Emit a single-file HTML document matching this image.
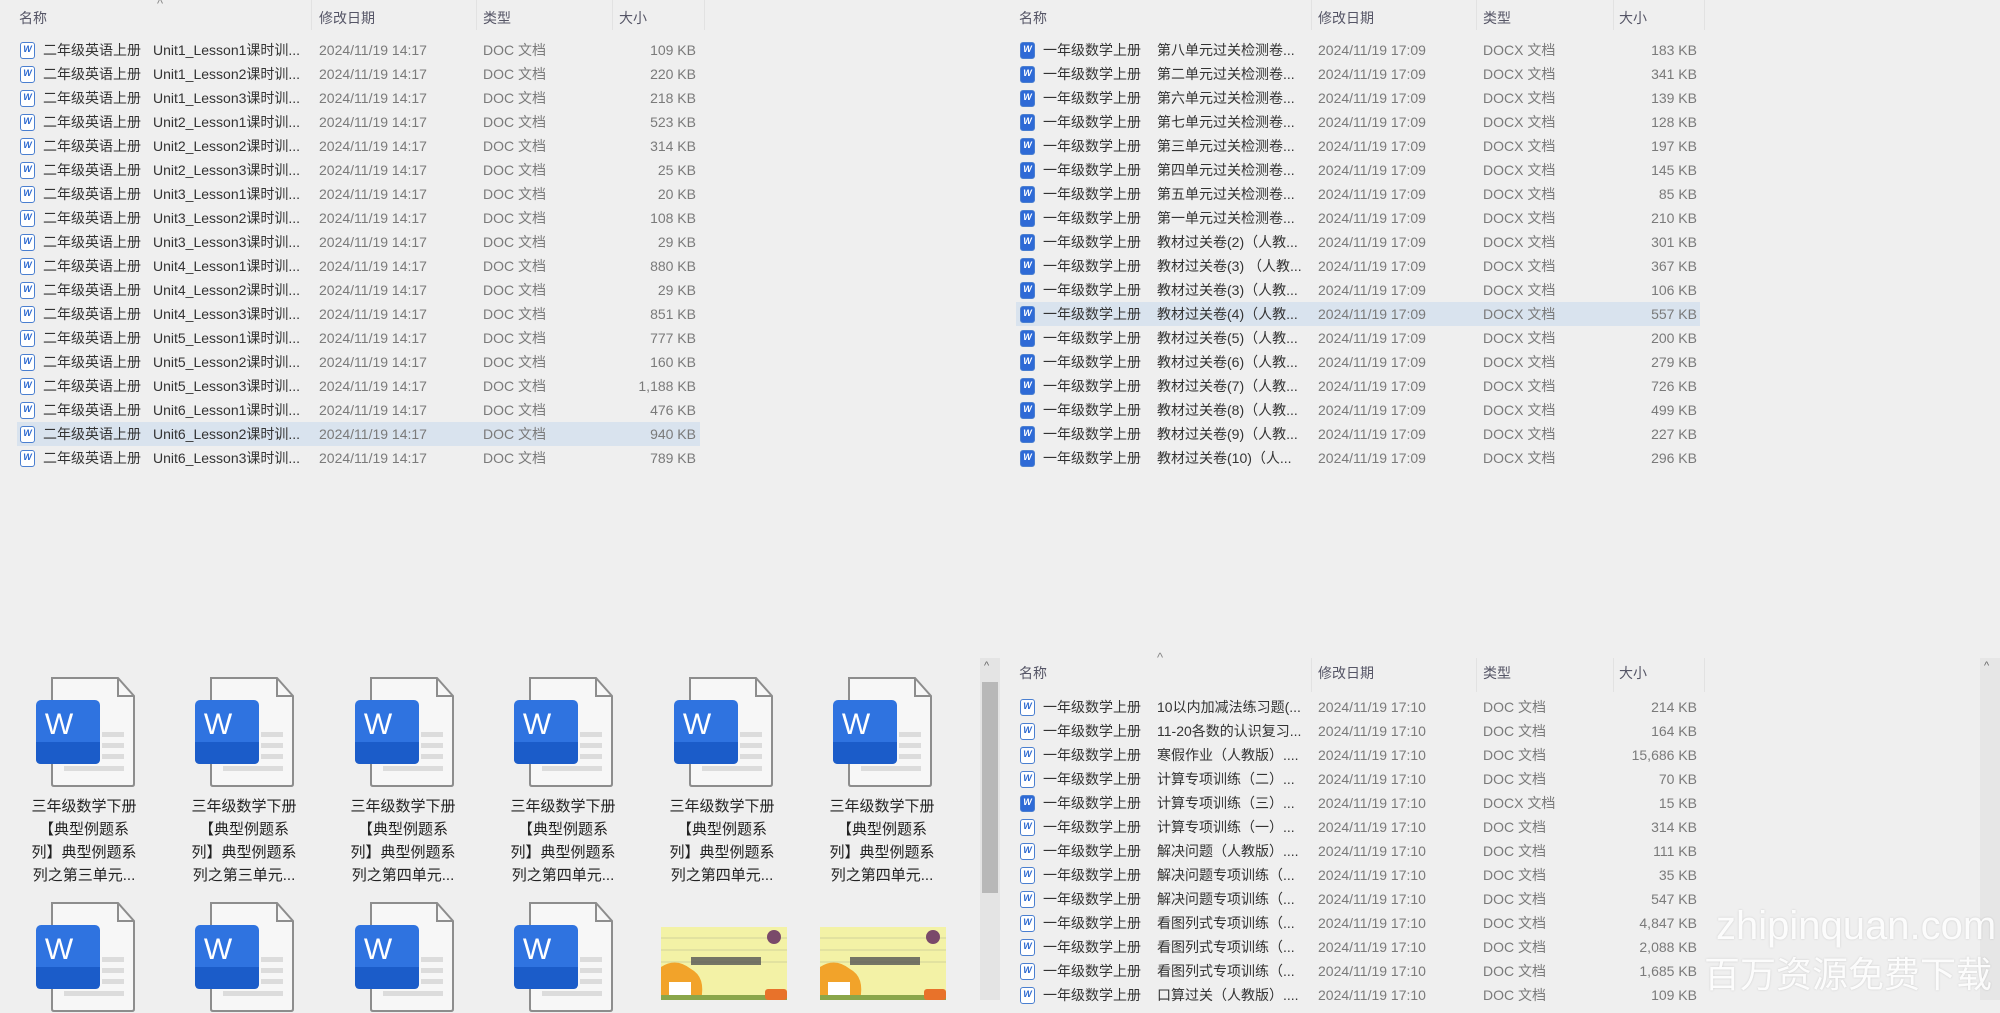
<!DOCTYPE html>
<html><head><meta charset="utf-8"><style>
*{margin:0;padding:0;box-sizing:border-box}
body{width:2000px;height:1000px;overflow:hidden;background:#efefef;font-family:"Liberation Sans","Noto Sans CJK SC",sans-serif;font-size:14px;position:relative}
.a{position:absolute;white-space:nowrap}
.h{color:#556;font-size:14px}
.sep{position:absolute;width:1px;background:#e2e2e2}
.r{position:absolute;height:24px;line-height:24px;color:#333}
.r span{position:absolute;white-space:nowrap}
.g{color:#7a7a7a}
.sel{background:#d9e3ee}
.ic{position:absolute;top:4px;width:15px;height:17px;border:1.5px solid #4a7fd0;border-radius:3px;background:#fff;font-size:9px;line-height:13px;text-align:center;color:#2f6bd0;font-weight:bold}
.icx{background:#2e6ad6;color:#fff}
.lab{position:absolute;width:140px;text-align:center;font-size:15px;line-height:23px;color:#222}
</style></head><body>
<svg width="0" height="0" style="position:absolute"><defs>
<symbol id="wd" viewBox="0 0 100 112">
<path d="M16 2 H82 L98 20 V108 Q98 110 96 110 H18 Q16 110 16 108 Z" fill="#f7f7f7" stroke="#8d8d8d" stroke-width="2"/>
<path d="M82 2 V20 H98" fill="none" stroke="#8d8d8d" stroke-width="2"/>
<rect x="66" y="56" width="22" height="5" fill="#dcdcdc"/><rect x="66" y="67" width="22" height="5" fill="#dcdcdc"/><rect x="66" y="78" width="22" height="5" fill="#dcdcdc"/><rect x="28" y="90" width="60" height="5" fill="#dcdcdc"/>
<rect x="0" y="24" width="64" height="64" rx="5" fill="#2f73e0"/>
<path d="M0 66 H64 V83 Q64 88 59 88 H5 Q0 88 0 83 Z" fill="#1b5cc9"/>
<text x="23" y="58" text-anchor="middle" font-family="Liberation Sans" font-size="30" fill="#fff">W</text>
</symbol></defs></svg>

<!-- top-left header -->
<div class="a h" style="left:19px;top:8px">名称</div>
<div class="a" style="left:157px;top:-4px;color:#888;font-size:13px">^</div>
<div class="a h" style="left:319px;top:8px">修改日期</div>
<div class="a h" style="left:483px;top:8px">类型</div>
<div class="a h" style="left:619px;top:8px">大小</div>
<div class="sep" style="left:311px;top:0;height:30px"></div><div class="sep" style="left:476px;top:0;height:30px"></div><div class="sep" style="left:612px;top:0;height:30px"></div><div class="sep" style="left:704px;top:0;height:30px"></div>
<!-- top-right header -->
<div class="a h" style="left:1019px;top:8px">名称</div>
<div class="a h" style="left:1318px;top:8px">修改日期</div>
<div class="a h" style="left:1483px;top:8px">类型</div>
<div class="a h" style="left:1619px;top:8px">大小</div>
<div class="sep" style="left:1311px;top:0;height:30px"></div><div class="sep" style="left:1476px;top:0;height:30px"></div><div class="sep" style="left:1613px;top:0;height:30px"></div><div class="sep" style="left:1704px;top:0;height:30px"></div>

<div id="tl">
<div class="r" style="left:17px;width:683px;top:38px"><i class="ic" style="left:3px">W</i><span style="left:26px">二年级英语上册</span><span style="left:136px">Unit1_Lesson1课时训...</span><span class="g" style="left:302px">2024/11/19 14:17</span><span class="g" style="left:466px">DOC 文档</span><span class="g" style="right:4px">109 KB</span></div>
<div class="r" style="left:17px;width:683px;top:62px"><i class="ic" style="left:3px">W</i><span style="left:26px">二年级英语上册</span><span style="left:136px">Unit1_Lesson2课时训...</span><span class="g" style="left:302px">2024/11/19 14:17</span><span class="g" style="left:466px">DOC 文档</span><span class="g" style="right:4px">220 KB</span></div>
<div class="r" style="left:17px;width:683px;top:86px"><i class="ic" style="left:3px">W</i><span style="left:26px">二年级英语上册</span><span style="left:136px">Unit1_Lesson3课时训...</span><span class="g" style="left:302px">2024/11/19 14:17</span><span class="g" style="left:466px">DOC 文档</span><span class="g" style="right:4px">218 KB</span></div>
<div class="r" style="left:17px;width:683px;top:110px"><i class="ic" style="left:3px">W</i><span style="left:26px">二年级英语上册</span><span style="left:136px">Unit2_Lesson1课时训...</span><span class="g" style="left:302px">2024/11/19 14:17</span><span class="g" style="left:466px">DOC 文档</span><span class="g" style="right:4px">523 KB</span></div>
<div class="r" style="left:17px;width:683px;top:134px"><i class="ic" style="left:3px">W</i><span style="left:26px">二年级英语上册</span><span style="left:136px">Unit2_Lesson2课时训...</span><span class="g" style="left:302px">2024/11/19 14:17</span><span class="g" style="left:466px">DOC 文档</span><span class="g" style="right:4px">314 KB</span></div>
<div class="r" style="left:17px;width:683px;top:158px"><i class="ic" style="left:3px">W</i><span style="left:26px">二年级英语上册</span><span style="left:136px">Unit2_Lesson3课时训...</span><span class="g" style="left:302px">2024/11/19 14:17</span><span class="g" style="left:466px">DOC 文档</span><span class="g" style="right:4px">25 KB</span></div>
<div class="r" style="left:17px;width:683px;top:182px"><i class="ic" style="left:3px">W</i><span style="left:26px">二年级英语上册</span><span style="left:136px">Unit3_Lesson1课时训...</span><span class="g" style="left:302px">2024/11/19 14:17</span><span class="g" style="left:466px">DOC 文档</span><span class="g" style="right:4px">20 KB</span></div>
<div class="r" style="left:17px;width:683px;top:206px"><i class="ic" style="left:3px">W</i><span style="left:26px">二年级英语上册</span><span style="left:136px">Unit3_Lesson2课时训...</span><span class="g" style="left:302px">2024/11/19 14:17</span><span class="g" style="left:466px">DOC 文档</span><span class="g" style="right:4px">108 KB</span></div>
<div class="r" style="left:17px;width:683px;top:230px"><i class="ic" style="left:3px">W</i><span style="left:26px">二年级英语上册</span><span style="left:136px">Unit3_Lesson3课时训...</span><span class="g" style="left:302px">2024/11/19 14:17</span><span class="g" style="left:466px">DOC 文档</span><span class="g" style="right:4px">29 KB</span></div>
<div class="r" style="left:17px;width:683px;top:254px"><i class="ic" style="left:3px">W</i><span style="left:26px">二年级英语上册</span><span style="left:136px">Unit4_Lesson1课时训...</span><span class="g" style="left:302px">2024/11/19 14:17</span><span class="g" style="left:466px">DOC 文档</span><span class="g" style="right:4px">880 KB</span></div>
<div class="r" style="left:17px;width:683px;top:278px"><i class="ic" style="left:3px">W</i><span style="left:26px">二年级英语上册</span><span style="left:136px">Unit4_Lesson2课时训...</span><span class="g" style="left:302px">2024/11/19 14:17</span><span class="g" style="left:466px">DOC 文档</span><span class="g" style="right:4px">29 KB</span></div>
<div class="r" style="left:17px;width:683px;top:302px"><i class="ic" style="left:3px">W</i><span style="left:26px">二年级英语上册</span><span style="left:136px">Unit4_Lesson3课时训...</span><span class="g" style="left:302px">2024/11/19 14:17</span><span class="g" style="left:466px">DOC 文档</span><span class="g" style="right:4px">851 KB</span></div>
<div class="r" style="left:17px;width:683px;top:326px"><i class="ic" style="left:3px">W</i><span style="left:26px">二年级英语上册</span><span style="left:136px">Unit5_Lesson1课时训...</span><span class="g" style="left:302px">2024/11/19 14:17</span><span class="g" style="left:466px">DOC 文档</span><span class="g" style="right:4px">777 KB</span></div>
<div class="r" style="left:17px;width:683px;top:350px"><i class="ic" style="left:3px">W</i><span style="left:26px">二年级英语上册</span><span style="left:136px">Unit5_Lesson2课时训...</span><span class="g" style="left:302px">2024/11/19 14:17</span><span class="g" style="left:466px">DOC 文档</span><span class="g" style="right:4px">160 KB</span></div>
<div class="r" style="left:17px;width:683px;top:374px"><i class="ic" style="left:3px">W</i><span style="left:26px">二年级英语上册</span><span style="left:136px">Unit5_Lesson3课时训...</span><span class="g" style="left:302px">2024/11/19 14:17</span><span class="g" style="left:466px">DOC 文档</span><span class="g" style="right:4px">1,188 KB</span></div>
<div class="r" style="left:17px;width:683px;top:398px"><i class="ic" style="left:3px">W</i><span style="left:26px">二年级英语上册</span><span style="left:136px">Unit6_Lesson1课时训...</span><span class="g" style="left:302px">2024/11/19 14:17</span><span class="g" style="left:466px">DOC 文档</span><span class="g" style="right:4px">476 KB</span></div>
<div class="r sel" style="left:17px;width:683px;top:422px"><i class="ic" style="left:3px">W</i><span style="left:26px">二年级英语上册</span><span style="left:136px">Unit6_Lesson2课时训...</span><span class="g" style="left:302px">2024/11/19 14:17</span><span class="g" style="left:466px">DOC 文档</span><span class="g" style="right:4px">940 KB</span></div>
<div class="r" style="left:17px;width:683px;top:446px"><i class="ic" style="left:3px">W</i><span style="left:26px">二年级英语上册</span><span style="left:136px">Unit6_Lesson3课时训...</span><span class="g" style="left:302px">2024/11/19 14:17</span><span class="g" style="left:466px">DOC 文档</span><span class="g" style="right:4px">789 KB</span></div>
</div>

<div id="tr">
<div class="r" style="left:1016px;width:684px;top:38px"><i class="ic icx" style="left:4px">W</i><span style="left:27px">一年级数学上册</span><span style="left:141px">第八单元过关检测卷...</span><span class="g" style="left:302px">2024/11/19 17:09</span><span class="g" style="left:467px">DOCX 文档</span><span class="g" style="right:3px">183 KB</span></div>
<div class="r" style="left:1016px;width:684px;top:62px"><i class="ic icx" style="left:4px">W</i><span style="left:27px">一年级数学上册</span><span style="left:141px">第二单元过关检测卷...</span><span class="g" style="left:302px">2024/11/19 17:09</span><span class="g" style="left:467px">DOCX 文档</span><span class="g" style="right:3px">341 KB</span></div>
<div class="r" style="left:1016px;width:684px;top:86px"><i class="ic icx" style="left:4px">W</i><span style="left:27px">一年级数学上册</span><span style="left:141px">第六单元过关检测卷...</span><span class="g" style="left:302px">2024/11/19 17:09</span><span class="g" style="left:467px">DOCX 文档</span><span class="g" style="right:3px">139 KB</span></div>
<div class="r" style="left:1016px;width:684px;top:110px"><i class="ic icx" style="left:4px">W</i><span style="left:27px">一年级数学上册</span><span style="left:141px">第七单元过关检测卷...</span><span class="g" style="left:302px">2024/11/19 17:09</span><span class="g" style="left:467px">DOCX 文档</span><span class="g" style="right:3px">128 KB</span></div>
<div class="r" style="left:1016px;width:684px;top:134px"><i class="ic icx" style="left:4px">W</i><span style="left:27px">一年级数学上册</span><span style="left:141px">第三单元过关检测卷...</span><span class="g" style="left:302px">2024/11/19 17:09</span><span class="g" style="left:467px">DOCX 文档</span><span class="g" style="right:3px">197 KB</span></div>
<div class="r" style="left:1016px;width:684px;top:158px"><i class="ic icx" style="left:4px">W</i><span style="left:27px">一年级数学上册</span><span style="left:141px">第四单元过关检测卷...</span><span class="g" style="left:302px">2024/11/19 17:09</span><span class="g" style="left:467px">DOCX 文档</span><span class="g" style="right:3px">145 KB</span></div>
<div class="r" style="left:1016px;width:684px;top:182px"><i class="ic icx" style="left:4px">W</i><span style="left:27px">一年级数学上册</span><span style="left:141px">第五单元过关检测卷...</span><span class="g" style="left:302px">2024/11/19 17:09</span><span class="g" style="left:467px">DOCX 文档</span><span class="g" style="right:3px">85 KB</span></div>
<div class="r" style="left:1016px;width:684px;top:206px"><i class="ic icx" style="left:4px">W</i><span style="left:27px">一年级数学上册</span><span style="left:141px">第一单元过关检测卷...</span><span class="g" style="left:302px">2024/11/19 17:09</span><span class="g" style="left:467px">DOCX 文档</span><span class="g" style="right:3px">210 KB</span></div>
<div class="r" style="left:1016px;width:684px;top:230px"><i class="ic icx" style="left:4px">W</i><span style="left:27px">一年级数学上册</span><span style="left:141px">教材过关卷(2)（人教...</span><span class="g" style="left:302px">2024/11/19 17:09</span><span class="g" style="left:467px">DOCX 文档</span><span class="g" style="right:3px">301 KB</span></div>
<div class="r" style="left:1016px;width:684px;top:254px"><i class="ic icx" style="left:4px">W</i><span style="left:27px">一年级数学上册</span><span style="left:141px">教材过关卷(3) （人教...</span><span class="g" style="left:302px">2024/11/19 17:09</span><span class="g" style="left:467px">DOCX 文档</span><span class="g" style="right:3px">367 KB</span></div>
<div class="r" style="left:1016px;width:684px;top:278px"><i class="ic icx" style="left:4px">W</i><span style="left:27px">一年级数学上册</span><span style="left:141px">教材过关卷(3)（人教...</span><span class="g" style="left:302px">2024/11/19 17:09</span><span class="g" style="left:467px">DOCX 文档</span><span class="g" style="right:3px">106 KB</span></div>
<div class="r sel" style="left:1016px;width:684px;top:302px"><i class="ic icx" style="left:4px">W</i><span style="left:27px">一年级数学上册</span><span style="left:141px">教材过关卷(4)（人教...</span><span class="g" style="left:302px">2024/11/19 17:09</span><span class="g" style="left:467px">DOCX 文档</span><span class="g" style="right:3px">557 KB</span></div>
<div class="r" style="left:1016px;width:684px;top:326px"><i class="ic icx" style="left:4px">W</i><span style="left:27px">一年级数学上册</span><span style="left:141px">教材过关卷(5)（人教...</span><span class="g" style="left:302px">2024/11/19 17:09</span><span class="g" style="left:467px">DOCX 文档</span><span class="g" style="right:3px">200 KB</span></div>
<div class="r" style="left:1016px;width:684px;top:350px"><i class="ic icx" style="left:4px">W</i><span style="left:27px">一年级数学上册</span><span style="left:141px">教材过关卷(6)（人教...</span><span class="g" style="left:302px">2024/11/19 17:09</span><span class="g" style="left:467px">DOCX 文档</span><span class="g" style="right:3px">279 KB</span></div>
<div class="r" style="left:1016px;width:684px;top:374px"><i class="ic icx" style="left:4px">W</i><span style="left:27px">一年级数学上册</span><span style="left:141px">教材过关卷(7)（人教...</span><span class="g" style="left:302px">2024/11/19 17:09</span><span class="g" style="left:467px">DOCX 文档</span><span class="g" style="right:3px">726 KB</span></div>
<div class="r" style="left:1016px;width:684px;top:398px"><i class="ic icx" style="left:4px">W</i><span style="left:27px">一年级数学上册</span><span style="left:141px">教材过关卷(8)（人教...</span><span class="g" style="left:302px">2024/11/19 17:09</span><span class="g" style="left:467px">DOCX 文档</span><span class="g" style="right:3px">499 KB</span></div>
<div class="r" style="left:1016px;width:684px;top:422px"><i class="ic icx" style="left:4px">W</i><span style="left:27px">一年级数学上册</span><span style="left:141px">教材过关卷(9)（人教...</span><span class="g" style="left:302px">2024/11/19 17:09</span><span class="g" style="left:467px">DOCX 文档</span><span class="g" style="right:3px">227 KB</span></div>
<div class="r" style="left:1016px;width:684px;top:446px"><i class="ic icx" style="left:4px">W</i><span style="left:27px">一年级数学上册</span><span style="left:141px">教材过关卷(10)（人...</span><span class="g" style="left:302px">2024/11/19 17:09</span><span class="g" style="left:467px">DOCX 文档</span><span class="g" style="right:3px">296 KB</span></div>
</div>

<!-- bottom-left icons panel -->
<svg class="a" style="left:36px;top:676px" width="100" height="112"><use href="#wd"/></svg>
<svg class="a" style="left:195px;top:676px" width="100" height="112"><use href="#wd"/></svg>
<svg class="a" style="left:355px;top:676px" width="100" height="112"><use href="#wd"/></svg>
<svg class="a" style="left:514px;top:676px" width="100" height="112"><use href="#wd"/></svg>
<svg class="a" style="left:674px;top:676px" width="100" height="112"><use href="#wd"/></svg>
<svg class="a" style="left:833px;top:676px" width="100" height="112"><use href="#wd"/></svg>
<div class="lab" style="left:14px;top:795px">三年级数学下册<br>【典型例题系<br>列】典型例题系<br>列之第三单元...</div>
<div class="lab" style="left:174px;top:795px">三年级数学下册<br>【典型例题系<br>列】典型例题系<br>列之第三单元...</div>
<div class="lab" style="left:333px;top:795px">三年级数学下册<br>【典型例题系<br>列】典型例题系<br>列之第四单元...</div>
<div class="lab" style="left:493px;top:795px">三年级数学下册<br>【典型例题系<br>列】典型例题系<br>列之第四单元...</div>
<div class="lab" style="left:652px;top:795px">三年级数学下册<br>【典型例题系<br>列】典型例题系<br>列之第四单元...</div>
<div class="lab" style="left:812px;top:795px">三年级数学下册<br>【典型例题系<br>列】典型例题系<br>列之第四单元...</div>
<svg class="a" style="left:36px;top:901px" width="100" height="112"><use href="#wd"/></svg>
<svg class="a" style="left:195px;top:901px" width="100" height="112"><use href="#wd"/></svg>
<svg class="a" style="left:355px;top:901px" width="100" height="112"><use href="#wd"/></svg>
<svg class="a" style="left:514px;top:901px" width="100" height="112"><use href="#wd"/></svg>
<svg class="a" style="left:661px;top:927px" width="126" height="73" viewBox="0 0 126 73">
<rect width="126" height="73" fill="#f3f2a6"/>
<rect x="0" y="10" width="126" height="2" fill="#e2e2a0"/><rect x="0" y="22" width="126" height="2" fill="#e2e2a0"/><rect x="0" y="34" width="126" height="2" fill="#e2e2a0"/>
<circle cx="113" cy="10" r="7" fill="#7a4a6a"/>
<rect x="30" y="30" width="70" height="8" fill="#555" opacity=".8"/>
<path d="M0 40 Q15 30 30 42 Q45 50 40 73 H0 Z" fill="#f2a32a"/>
<rect x="8" y="55" width="22" height="14" fill="#fff"/>
<rect x="0" y="68" width="126" height="5" fill="#8aa64a"/>
<rect x="104" y="62" width="22" height="11" rx="3" fill="#e8722a"/>
</svg>
<svg class="a" style="left:820px;top:927px" width="126" height="73" viewBox="0 0 126 73">
<rect width="126" height="73" fill="#f3f2a6"/>
<rect x="0" y="10" width="126" height="2" fill="#e2e2a0"/><rect x="0" y="22" width="126" height="2" fill="#e2e2a0"/><rect x="0" y="34" width="126" height="2" fill="#e2e2a0"/>
<circle cx="113" cy="10" r="7" fill="#7a4a6a"/>
<rect x="30" y="30" width="70" height="8" fill="#555" opacity=".8"/>
<path d="M0 40 Q15 30 30 42 Q45 50 40 73 H0 Z" fill="#f2a32a"/>
<rect x="8" y="55" width="22" height="14" fill="#fff"/>
<rect x="0" y="68" width="126" height="5" fill="#8aa64a"/>
<rect x="104" y="62" width="22" height="11" rx="3" fill="#e8722a"/>
</svg>
<div class="a" style="left:980px;top:658px;width:20px;height:342px;background:#e4e4e4"></div>
<div class="a" style="left:984px;top:660px;color:#666;font-size:11px">^</div>
<div class="a" style="left:982px;top:682px;width:16px;height:211px;background:#b8b8b8"></div>

<!-- bottom-right list -->
<div class="a h" style="left:1019px;top:663px">名称</div>
<div class="a" style="left:1157px;top:650px;color:#888;font-size:13px">^</div>
<div class="a h" style="left:1318px;top:663px">修改日期</div>
<div class="a h" style="left:1483px;top:663px">类型</div>
<div class="a h" style="left:1619px;top:663px">大小</div>
<div class="sep" style="left:1311px;top:658px;height:34px"></div><div class="sep" style="left:1476px;top:658px;height:34px"></div><div class="sep" style="left:1613px;top:658px;height:34px"></div><div class="sep" style="left:1704px;top:658px;height:34px"></div>
<div class="a" style="left:1980px;top:658px;width:20px;height:342px;background:#e6e6e6"></div>
<div class="a" style="left:1984px;top:660px;color:#666;font-size:11px">^</div>

<div class="r" style="left:1016px;width:684px;top:695px"><i class="ic" style="left:4px">W</i><span style="left:27px">一年级数学上册</span><span style="left:141px">10以内加减法练习题(...</span><span class="g" style="left:302px">2024/11/19 17:10</span><span class="g" style="left:467px">DOC 文档</span><span class="g" style="right:3px">214 KB</span></div>
<div class="r" style="left:1016px;width:684px;top:719px"><i class="ic" style="left:4px">W</i><span style="left:27px">一年级数学上册</span><span style="left:141px">11-20各数的认识复习...</span><span class="g" style="left:302px">2024/11/19 17:10</span><span class="g" style="left:467px">DOC 文档</span><span class="g" style="right:3px">164 KB</span></div>
<div class="r" style="left:1016px;width:684px;top:743px"><i class="ic" style="left:4px">W</i><span style="left:27px">一年级数学上册</span><span style="left:141px">寒假作业（人教版）....</span><span class="g" style="left:302px">2024/11/19 17:10</span><span class="g" style="left:467px">DOC 文档</span><span class="g" style="right:3px">15,686 KB</span></div>
<div class="r" style="left:1016px;width:684px;top:767px"><i class="ic" style="left:4px">W</i><span style="left:27px">一年级数学上册</span><span style="left:141px">计算专项训练（二）...</span><span class="g" style="left:302px">2024/11/19 17:10</span><span class="g" style="left:467px">DOC 文档</span><span class="g" style="right:3px">70 KB</span></div>
<div class="r" style="left:1016px;width:684px;top:791px"><i class="ic icx" style="left:4px">W</i><span style="left:27px">一年级数学上册</span><span style="left:141px">计算专项训练（三）...</span><span class="g" style="left:302px">2024/11/19 17:10</span><span class="g" style="left:467px">DOCX 文档</span><span class="g" style="right:3px">15 KB</span></div>
<div class="r" style="left:1016px;width:684px;top:815px"><i class="ic" style="left:4px">W</i><span style="left:27px">一年级数学上册</span><span style="left:141px">计算专项训练（一）...</span><span class="g" style="left:302px">2024/11/19 17:10</span><span class="g" style="left:467px">DOC 文档</span><span class="g" style="right:3px">314 KB</span></div>
<div class="r" style="left:1016px;width:684px;top:839px"><i class="ic" style="left:4px">W</i><span style="left:27px">一年级数学上册</span><span style="left:141px">解决问题（人教版）....</span><span class="g" style="left:302px">2024/11/19 17:10</span><span class="g" style="left:467px">DOC 文档</span><span class="g" style="right:3px">111 KB</span></div>
<div class="r" style="left:1016px;width:684px;top:863px"><i class="ic" style="left:4px">W</i><span style="left:27px">一年级数学上册</span><span style="left:141px">解决问题专项训练（...</span><span class="g" style="left:302px">2024/11/19 17:10</span><span class="g" style="left:467px">DOC 文档</span><span class="g" style="right:3px">35 KB</span></div>
<div class="r" style="left:1016px;width:684px;top:887px"><i class="ic" style="left:4px">W</i><span style="left:27px">一年级数学上册</span><span style="left:141px">解决问题专项训练（...</span><span class="g" style="left:302px">2024/11/19 17:10</span><span class="g" style="left:467px">DOC 文档</span><span class="g" style="right:3px">547 KB</span></div>
<div class="r" style="left:1016px;width:684px;top:911px"><i class="ic" style="left:4px">W</i><span style="left:27px">一年级数学上册</span><span style="left:141px">看图列式专项训练（...</span><span class="g" style="left:302px">2024/11/19 17:10</span><span class="g" style="left:467px">DOC 文档</span><span class="g" style="right:3px">4,847 KB</span></div>
<div class="r" style="left:1016px;width:684px;top:935px"><i class="ic" style="left:4px">W</i><span style="left:27px">一年级数学上册</span><span style="left:141px">看图列式专项训练（...</span><span class="g" style="left:302px">2024/11/19 17:10</span><span class="g" style="left:467px">DOC 文档</span><span class="g" style="right:3px">2,088 KB</span></div>
<div class="r" style="left:1016px;width:684px;top:959px"><i class="ic" style="left:4px">W</i><span style="left:27px">一年级数学上册</span><span style="left:141px">看图列式专项训练（...</span><span class="g" style="left:302px">2024/11/19 17:10</span><span class="g" style="left:467px">DOC 文档</span><span class="g" style="right:3px">1,685 KB</span></div>
<div class="r" style="left:1016px;width:684px;top:983px"><i class="ic" style="left:4px">W</i><span style="left:27px">一年级数学上册</span><span style="left:141px">口算过关（人教版）....</span><span class="g" style="left:302px">2024/11/19 17:10</span><span class="g" style="left:467px">DOC 文档</span><span class="g" style="right:3px">109 KB</span></div>

<!-- watermark -->
<div class="a" style="left:1716px;top:902px;font-size:40px;line-height:48px;color:rgba(255,255,255,.92);text-shadow:0 0 2px rgba(0,0,0,.15)">zhipinquan.com</div>
<div class="a" style="left:1704px;top:950px;font-size:36px;line-height:44px;color:rgba(255,255,255,.92);text-shadow:0 0 2px rgba(0,0,0,.15);font-family:'Noto Sans CJK SC',sans-serif">百万资源免费下载</div>
</body></html>
